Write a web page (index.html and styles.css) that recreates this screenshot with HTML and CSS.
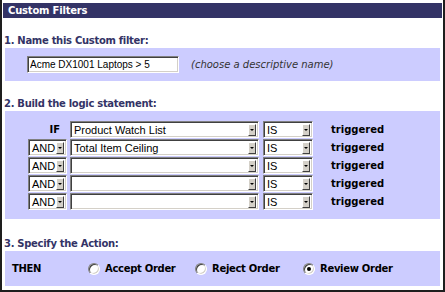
FILE: index.html
```html
<!DOCTYPE html>
<html lang="en">

<head>
    <meta charset="UTF-8">
    <title>Custom Filters</title>
    <link rel="stylesheet" href="styles.css">
</head>

<body>
    <div class="panel">
        <div class="title">Custom Filters</div>

        <h2 class="step step-first">1. Name this Custom filter:</h2>
        <div class="band band-name">
            <input class="textbox" type="text" value="Acme DX1001 Laptops > 5">
            <span class="hint">(choose a descriptive name)</span>
        </div>

        <h2 class="step">2. Build the logic statement:</h2>
        <div class="band band-logic">
            <div class="rule">
                <span class="op-label">IF</span>
                <div class="dd field"><span class="dd-text">Product Watch List</span><span class="dd-btn"></span></div>
                <div class="dd cmp"><span class="dd-text">IS</span><span class="dd-btn"></span></div>
                <span class="state">triggered</span>
            </div>
            <div class="rule">
                <div class="dd op"><span class="dd-text">AND</span><span class="dd-btn"></span></div>
                <div class="dd field"><span class="dd-text">Total Item Ceiling</span><span class="dd-btn"></span></div>
                <div class="dd cmp"><span class="dd-text">IS</span><span class="dd-btn"></span></div>
                <span class="state">triggered</span>
            </div>
            <div class="rule">
                <div class="dd op"><span class="dd-text">AND</span><span class="dd-btn"></span></div>
                <div class="dd field"><span class="dd-text"></span><span class="dd-btn"></span></div>
                <div class="dd cmp"><span class="dd-text">IS</span><span class="dd-btn"></span></div>
                <span class="state">triggered</span>
            </div>
            <div class="rule">
                <div class="dd op"><span class="dd-text">AND</span><span class="dd-btn"></span></div>
                <div class="dd field"><span class="dd-text"></span><span class="dd-btn"></span></div>
                <div class="dd cmp"><span class="dd-text">IS</span><span class="dd-btn"></span></div>
                <span class="state">triggered</span>
            </div>
            <div class="rule">
                <div class="dd op"><span class="dd-text">AND</span><span class="dd-btn"></span></div>
                <div class="dd field"><span class="dd-text"></span><span class="dd-btn"></span></div>
                <div class="dd cmp"><span class="dd-text">IS</span><span class="dd-btn"></span></div>
                <span class="state">triggered</span>
            </div>
        </div>

        <h2 class="step step-last">3. Specify the Action:</h2>
        <div class="band band-action">
            <span class="then">THEN</span>
            <label class="choice"><span class="radio"></span>Accept Order</label>
            <label class="choice"><span class="radio"></span>Reject Order</label>
            <label class="choice"><span class="radio checked"></span>Review Order</label>
        </div>
    </div>
</body>

</html>
```

FILE: styles.css
```css
body {
    margin: 0;
    background-color: #ffffff;
    font-family: 'DejaVu Sans', Verdana, sans-serif;
    font-size: 10px;
}

.panel {
    width: 445px;
    height: 292px;
    box-sizing: border-box;
    border: 2px solid #1e1e1e;
    border-top: 0;
    padding-top: 3px;
}

.title {
    margin: 0 1px;
    height: 15px;
    line-height: 15px;
    padding-left: 5px;
    background-color: #333366;
    color: #ffffff;
    font-weight: bold;
    letter-spacing: -0.2px;
}

.step {
    margin: 16px 0 1px 2px;
    font-size: 10px;
    line-height: 13px;
    font-weight: bold;
    letter-spacing: -0.3px;
    color: #333366;
}

.step-last {
    margin-top: 18px;
}

.band {
    margin: 0 3px;
    background-color: #ccccff;
}

/* section 1 */
.band-name {
    display: flex;
    align-items: center;
    height: 33px;
    padding-left: 22px;
    box-sizing: border-box;
}

.textbox {
    width: 152px;
    height: 17px;
    box-sizing: border-box;
    margin: 0;
    padding: 0 2px;
    font-family: 'Liberation Sans', Arial, sans-serif;
    font-size: 10px;
    color: #000000;
    background-color: #ffffff;
    border: 1px solid;
    border-color: #808080 #ffffff #ffffff #808080;
    box-shadow: inset 1px 1px 0 #404040, inset -1px -1px 0 #d4d0c8;
    outline: none;
}

.hint {
    margin-left: 12px;
    font-style: italic;
    color: #333333;
}

/* section 2 */
.band-logic {
    height: 108px;
    box-sizing: border-box;
    padding: 10px 0 0 23px;
}

.rule {
    display: flex;
    align-items: center;
    height: 17px;
}

.rule + .rule {
    margin-top: 1px;
}

.op-label {
    width: 39px;
    box-sizing: border-box;
    padding-right: 7px;
    text-align: right;
    font-weight: bold;
}

.dd {
    display: flex;
    align-items: center;
    height: 17px;
    box-sizing: border-box;
    padding: 1px 2px 1px 1px;
    background-color: #ffffff;
    border: 1px solid;
    border-color: #808080 #ffffff #ffffff #808080;
    box-shadow: inset 1px 1px 0 #404040, inset -1px -1px 0 #d4d0c8;
}

.dd-text {
    flex: 1;
    padding-left: 2px;
    font-family: 'Liberation Sans', Arial, sans-serif;
    font-size: 11px;
    white-space: nowrap;
    overflow: hidden;
}

.dd-btn {
    position: relative;
    width: 8px;
    height: 12px;
    box-sizing: border-box;
    background-color: #d4d0c8;
    border: 1px solid;
    border-color: #ffffff #404040 #404040 #ffffff;
}

.dd-btn::after {
    content: "";
    position: absolute;
    left: 1px;
    top: 4px;
    border-left: 2px solid transparent;
    border-right: 2px solid transparent;
    border-top: 2px solid #000000;
}

.op {
    width: 39px;
}

.field {
    width: 189px;
    margin-left: 3px;
}

.cmp {
    width: 50px;
    margin-left: 4px;
}

.state {
    margin-left: 18px;
    font-weight: bold;
}

/* section 3 */
.band-action {
    display: grid;
    grid-template-columns: 76px 107px 108px auto;
    align-items: center;
    height: 35px;
    padding-left: 7px;
    font-weight: bold;
    letter-spacing: -0.3px;
}

.choice {
    display: flex;
    align-items: center;
}

.radio {
    position: relative;
    width: 12px;
    height: 12px;
    box-sizing: border-box;
    margin-right: 5px;
    border-radius: 50%;
    background-color: #ffffff;
    border: 1px solid;
    border-color: #808080 #ffffff #ffffff #808080;
    box-shadow: inset 1px 1px 0 #404040, inset -1px -1px 0 #d4d0c8;
}

.radio.checked::after {
    content: "";
    position: absolute;
    left: 3px;
    top: 3px;
    width: 4px;
    height: 4px;
    border-radius: 50%;
    background-color: #000000;
}
```
